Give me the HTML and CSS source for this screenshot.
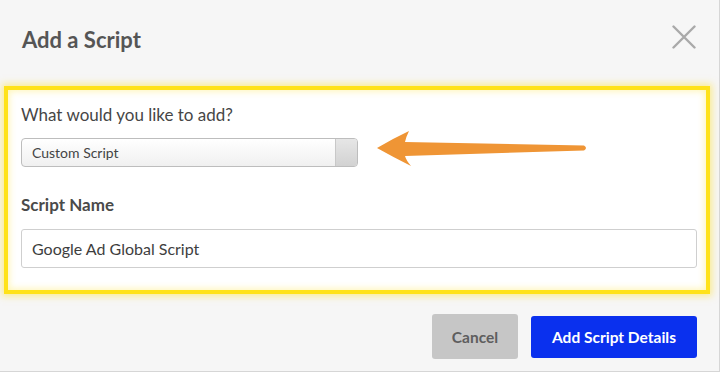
FILE: index.html
```html
<!DOCTYPE html>
<html lang="en">
<head>
  <meta charset="UTF-8">
  <title>Add a Script</title>
  <link rel="stylesheet" href="styles.css">
</head>
<body>
  <div class="modal">
    <div class="modal-header">
      <h2>Add a Script</h2>
      <svg class="close" width="24" height="24" viewBox="0 0 24 24">
        <path d="M1.5 1.5 L22.5 22.5 M22.5 1.5 L1.5 22.5" stroke="#a9a9a9" stroke-width="2.4" stroke-linecap="round"/>
      </svg>
    </div>

    <div class="highlight">
      <label class="question">What would you like to add?</label>
      <div class="select">
        <span>Custom Script</span>
        <span class="select-btn"></span>
      </div>

      <label class="field-label">Script Name</label>
      <div class="text-input">Google Ad Global Script</div>

      <svg class="arrow" width="230" height="50" viewBox="365 125 230 50">
        <path d="M377,148 Q392,139 409,131 Q406,137 405,142 L584,145.5 Q588,148 584,150.5 L405,156 Q406,160 411,166 Q393,157 377,148 Z" fill="#ef9535"/>
      </svg>
    </div>

    <div class="modal-footer">
      <button class="btn btn-cancel">Cancel</button>
      <button class="btn btn-primary">Add Script Details</button>
    </div>
  </div>
</body>
</html>
```

FILE: styles.css
```css
body {
  margin: 0;
  font-family: "Lato", "Open Sans", Arial, sans-serif;
  background: #f6f6f6;
}
.modal {
  width: 719px;
  height: 371px;
  background: #f6f6f6;
  border-right: 1px solid #d6d6d6;
  border-bottom: 1px solid #d6d6d6;
  display: flex;
  flex-direction: column;
}
.modal-header {
  height: 86px;
  flex-shrink: 0;
  display: flex;
  align-items: center;
  justify-content: space-between;
  padding: 0 22px 8px 22px;
  box-sizing: border-box;
}
.modal-header h2 {
  margin: 0;
  font-size: 22px;
  font-weight: 700;
  color: #555;
}
.close {
  margin-right: 1px;
  margin-top: -4px;
}
.highlight {
  position: relative;
  margin: 0 9px 0 4px;
  border: 4px solid #ffe21a;
  box-shadow: 0 0 7px 2px rgba(255, 226, 40, 0.5), inset 0 0 7px 1px rgba(255, 230, 60, 0.4);
  background: #fff;
  padding: 15px 9px 22px 13px;
}
.question {
  display: block;
  font-size: 17px;
  color: #464646;
  line-height: 20px;
}
.select {
  margin-top: 13px;
  width: 337px;
  height: 29px;
  box-sizing: border-box;
  border: 1px solid #bdbdbd;
  border-radius: 4px;
  background: linear-gradient(#fff, #f0f0f0);
  display: flex;
  align-items: center;
  justify-content: space-between;
  font-size: 14px;
  color: #444;
  overflow: hidden;
}
.select span:first-child { padding-left: 10px; }
.select-btn {
  width: 21px;
  height: 100%;
  background: linear-gradient(#e6e6e6, #d2d2d2);
  border-left: 1px solid #c8c8c8;
}
.field-label {
  display: block;
  margin-top: 28px;
  font-size: 17px;
  font-weight: 700;
  color: #4a4a4a;
  line-height: 20px;
}
.text-input {
  margin-top: 14px;
  height: 39px;
  box-sizing: border-box;
  border: 1px solid #cfcfcf;
  border-radius: 3px;
  padding: 0 10px;
  display: flex;
  align-items: center;
  font-size: 16px;
  color: #3e3e3e;
}
.arrow {
  position: absolute;
  left: 357px;
  top: 35px;
}
.modal-footer {
  display: flex;
  justify-content: flex-end;
  gap: 13px;
  padding: 20px 22px 0 0;
}
.btn {
  font-family: inherit;
  font-size: 15.5px;
  font-weight: 700;
  border: none;
  border-radius: 3px;
  height: 45px;
}
.btn-cancel {
  width: 86px;
  background: #c6c6c6;
  color: #5e5e5e;
}
.btn-primary {
  width: 166px;
  height: 42px;
  margin-top: 2px;
  background: #0a30ee;
  color: #fff;
}
```
